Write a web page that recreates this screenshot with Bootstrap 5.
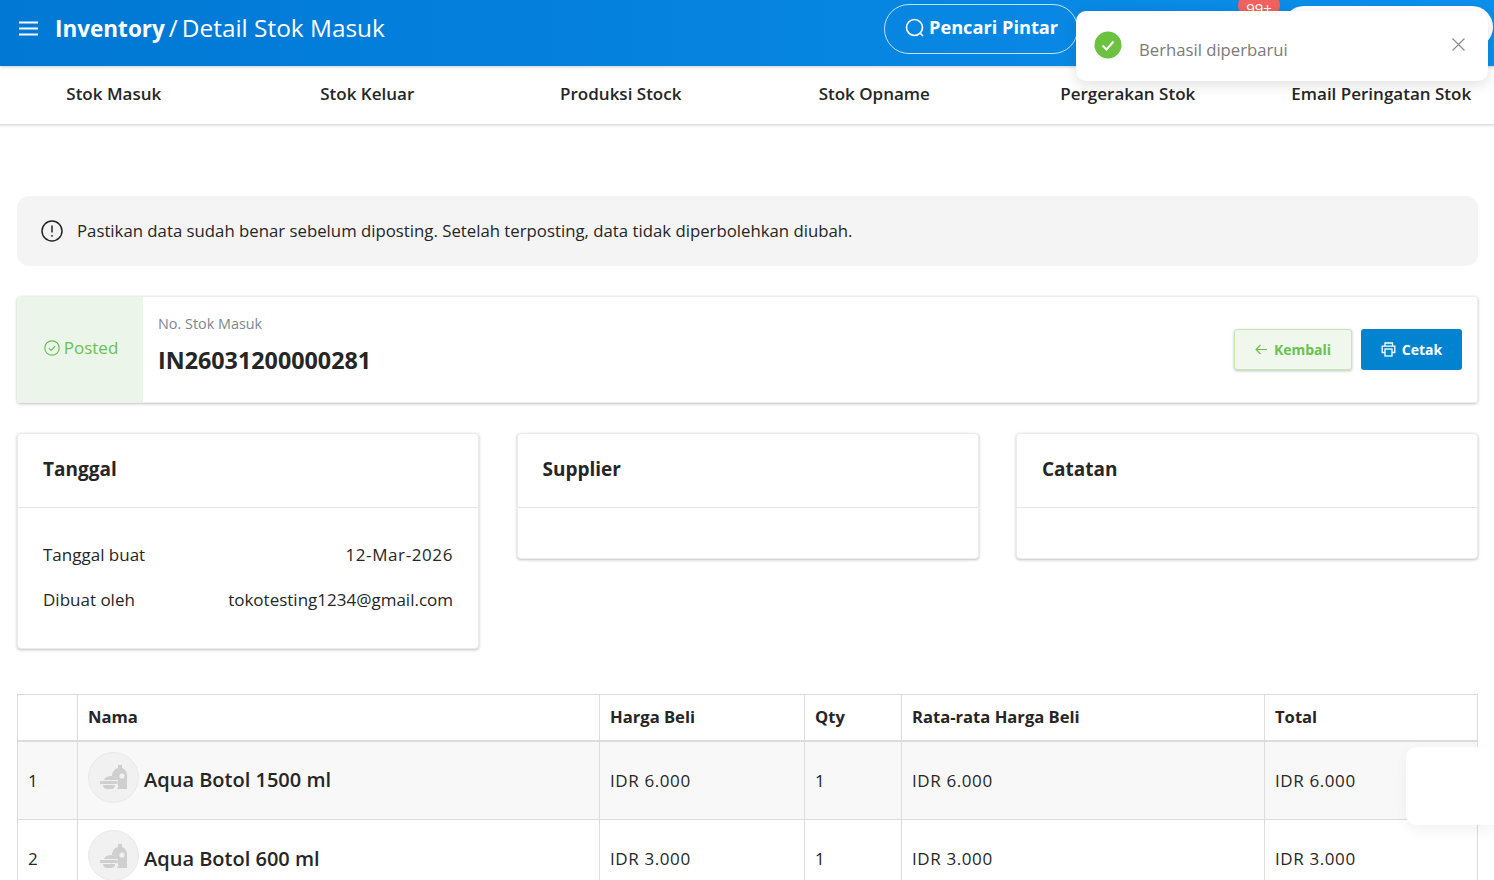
<!DOCTYPE html>
<html lang="id">
<head>
<meta charset="utf-8">
<title>Detail Stok Masuk</title>
<link href="https://cdn.jsdelivr.net/npm/bootstrap@5.3.0/dist/css/bootstrap.min.css" rel="stylesheet">
<style>
html,body{height:880px;overflow:hidden}
body{font-family:"Open Sans","Noto Sans",sans-serif;color:#262626;font-size:17px;background:#fff;position:relative}
.app-top{height:66px;background:linear-gradient(90deg,#0078d4,#0b8fea);color:#fff;padding:0 18px 10px;box-shadow:0 1px 3px rgba(0,0,0,.2);position:relative;z-index:2}
.app-title{font-size:24.4px;margin-left:16px;white-space:nowrap}
.app-title b{font-weight:700;font-size:22.5px}
.slash-mark{margin:0 4px 0 4px}
.finder{position:absolute;left:884px;top:4px;width:194px;height:50px;border:1px solid rgba(255,255,255,.75);border-radius:25px;font-weight:700;font-size:18.2px;padding:0 0 2px 20px;gap:4px}
.count-pill{position:absolute;left:1238px;top:-6px;width:42px;height:22px;background:#f0625f;border-radius:11px;font-size:15px;text-align:center;line-height:28px}
.user-pill{position:absolute;left:1283px;top:6px;width:210px;height:42px;background:#fff;border-radius:21px}
.tab-strip{height:58px;margin-left:-13px;width:1521px;box-shadow:0 1px 3px rgba(0,0,0,.2);position:relative;z-index:1}
.tab-cell{width:253.5px;text-align:center;font-weight:600;line-height:56px;white-space:nowrap;color:#262626}
.note-toast{position:absolute;left:1076px;top:11px;width:412px;height:70px;background:#fff;border-radius:10px;box-shadow:0 4px 14px rgba(0,0,0,.12);z-index:5;color:#7a7a7a;font-size:16.7px}
.note-toast .t-ico{position:absolute;left:18px;top:20px}
.note-toast .t-text{position:absolute;left:63px;top:27px;line-height:24px}
.note-toast .t-x{position:absolute;left:375px;top:26px}
.page-body{padding:72px 16px 0 17px}
.info-bar{height:70px;background:#f4f4f4;border-radius:12px;padding-left:24px;gap:14px;margin-bottom:30px;font-size:16.77px}
.head-panel{height:107px;border:1px solid #eee;border-left:0;border-radius:4px;box-shadow:0 1px 3px rgba(0,0,0,.25);margin-bottom:30px;overflow:hidden}
.posted-box{width:126px;background:#ecf5ea;color:#69c24f;gap:4px;padding:0 0 3px 2px}
.head-main{padding:0 0 10px 15px}
.lbl-no{font-size:14.4px;color:#80868c;line-height:20px;margin-bottom:11px}
.val-no{font-size:23.3px;font-weight:700;line-height:30px}
.act-btn{font-size:14px;font-weight:700;height:41px;border-radius:3px;gap:6px;padding:0;display:flex;align-items:center;justify-content:center}
.act-back{width:118px;background:#f0f7ed;border:1px solid #c2e6b4;color:#69c24f;box-shadow:0 1px 3px rgba(0,0,0,.25);margin:0 9px 0 0}
.act-print{width:101px;background:#0283cf;border:0;color:#fff;margin:0 15px 0 0}
.tri-grid{display:grid;grid-template-columns:462px 462px 462px;column-gap:37.5px;align-items:start;margin-bottom:45px}
.info-panel{border-radius:4px;box-shadow:0 1px 3px rgba(0,0,0,.25);border:1px solid #ececec}
.info-head{height:74px;padding:0 25px;border-bottom:1px solid #e6e6e6;font-size:19px;font-weight:700;line-height:71px}
.info-foot{height:50px}
.info-rows{padding:24px 25px 26px;height:140px}
.info-rows>div{height:45px;line-height:45px}
.num-txt{letter-spacing:.6px}
.stock-table{width:1460px;margin:0;border-color:#dcdcdc;table-layout:fixed;font-size:17px;color:#262626}
.stock-table th{height:46px;font-weight:700;font-size:16.6px;padding:0 10px;vertical-align:middle;border-bottom-width:2px}
.stock-table td{height:78px;padding:0 10px;vertical-align:middle}
.stock-table .alt-row td{background:#f8f8f8;height:79px}
.item-thumb{width:51px;height:51px;border-radius:50%;background:#f1f1f1;border:1px solid #e9e9e9;flex:none;margin:0 1px 6px 0}
.item-name{font-size:20px;font-weight:600}
.float-blank{position:absolute;left:1406px;top:747px;width:88px;height:78px;background:#fff;border-radius:10px 0 0 10px;box-shadow:0 6px 14px rgba(0,0,0,.05);z-index:3}
</style>
</head>
<body>
<header class="app-top d-flex align-items-center">
  <svg width="21" height="15" viewBox="0 0 21 15" fill="none" stroke="#fff" stroke-width="1.8"><path d="M1 1.5h19M1 7.5h19M1 13.5h19"/></svg>
  <div class="app-title"><b>Inventory</b><span class="slash-mark">/</span>Detail Stok Masuk</div>
  <div class="finder d-flex align-items-center">
    <svg width="20" height="20" viewBox="0 0 20 20" fill="none" stroke="#fff" stroke-width="1.6"><circle cx="9.5" cy="9.5" r="8"/><path d="M15 15l3 3"/></svg>
    <span>Pencari Pintar</span>
  </div>
  <div class="count-pill">99+</div>
  <div class="user-pill"></div>
</header>
<nav class="tab-strip d-flex">
  <div class="tab-cell">Stok Masuk</div>
  <div class="tab-cell">Stok Keluar</div>
  <div class="tab-cell">Produksi Stock</div>
  <div class="tab-cell">Stok Opname</div>
  <div class="tab-cell">Pergerakan Stok</div>
  <div class="tab-cell">Email Peringatan Stok</div>
</nav>
<div class="note-toast">
  <svg class="t-ico" width="28" height="28" viewBox="0 0 28 28"><circle cx="14" cy="14" r="13.5" fill="#6cc23f"/><path d="M8.5 14.5l4 4 7-8" fill="none" stroke="#fff" stroke-width="2"/></svg>
  <div class="t-text">Berhasil diperbarui</div>
  <svg class="t-x" width="15" height="15" viewBox="0 0 15 15" fill="none" stroke="#8c8c8c" stroke-width="1.2"><path d="M1.5 1.5l12 12M13.5 1.5l-12 12"/></svg>
</div>
<main class="page-body">
  <div class="info-bar d-flex align-items-center">
    <svg width="22" height="22" viewBox="0 0 22 22" fill="none" stroke="#262626" stroke-width="1.5"><circle cx="11" cy="11" r="10"/><path d="M11 5.5v7M11 15v1.8"/></svg>
    <span>Pastikan data sudah benar sebelum diposting. Setelah terposting, data tidak diperbolehkan diubah.</span>
  </div>
  <section class="head-panel d-flex">
    <div class="posted-box d-flex align-items-center justify-content-center">
      <svg width="16" height="16" viewBox="0 0 16 16" fill="none" stroke="#69c24f" stroke-width="1.2"><circle cx="8" cy="8" r="7.2"/><path d="M4.8 8.2l2.3 2.3 4-4.4"/></svg>
      <span>Posted</span>
    </div>
    <div class="head-main flex-grow-1 d-flex flex-column justify-content-center">
      <div class="lbl-no">No. Stok Masuk</div>
      <div class="val-no">IN26031200000281</div>
    </div>
    <div class="d-flex align-items-center">
      <button class="btn act-btn act-back"><svg width="13" height="11" viewBox="0 0 13 11" fill="none" stroke="#69c24f" stroke-width="1.1"><path d="M12 5.5H1M5.5 1L1 5.5 5.5 10"/></svg>Kembali</button>
      <button class="btn act-btn act-print"><svg width="15" height="15" viewBox="0 0 15 15" fill="none" stroke="#fff" stroke-width="1.3"><path d="M4 4V1h7.5v3M4 10.5H1.2V4.2h12.6v6.3H11"/><rect x="4" y="7" width="7" height="7"/></svg>Cetak</button>
    </div>
  </section>
  <section class="tri-grid">
    <div class="card info-panel">
      <div class="info-head">Tanggal</div>
      <div class="info-rows">
        <div class="d-flex justify-content-between"><span>Tanggal buat</span><span class="num-txt">12-Mar-2026</span></div>
        <div class="d-flex justify-content-between"><span>Dibuat oleh</span><span>tokotesting1234@gmail.com</span></div>
      </div>
    </div>
    <div class="card info-panel"><div class="info-head">Supplier</div><div class="info-foot"></div></div>
    <div class="card info-panel"><div class="info-head">Catatan</div><div class="info-foot"></div></div>
  </section>
  <table class="table table-bordered stock-table">
    <colgroup><col style="width:60px"><col style="width:522px"><col style="width:205px"><col style="width:97px"><col style="width:363px"><col style="width:213px"></colgroup>
    <thead><tr><th></th><th>Nama</th><th>Harga Beli</th><th>Qty</th><th>Rata-rata Harga Beli</th><th>Total</th></tr></thead>
    <tbody>
      <tr class="alt-row"><td>1</td><td><div class="d-flex align-items-center gap-1">
        <div class="item-thumb d-flex align-items-center justify-content-center"><svg width="28" height="26" viewBox="0 0 28 26" fill="#cfcfcf"><path d="M18 1h4v3c3 1 5 4 5 7v14H17c2-2 1-5 0-6 1-1 1-3 0-4-1-2-3-3-5-3 0-4 2-7 6-8z"/><circle cx="22" cy="12" r="2.6" fill="#f1f1f1"/><path d="M4 16c1-3 4-4 7-4s6 1 6 4zM1 17h15a1.5 1.5 0 010 3H1a1.5 1.5 0 010-3zM3 21h12c0 3-2 4-4 4H7c-2 0-4-1-4-4z"/></svg></div>
        <span class="item-name">Aqua Botol 1500 ml</span></div></td><td class="num-txt">IDR 6.000</td><td>1</td><td class="num-txt">IDR 6.000</td><td class="num-txt">IDR 6.000</td></tr>
      <tr><td>2</td><td><div class="d-flex align-items-center gap-1">
        <div class="item-thumb d-flex align-items-center justify-content-center"><svg width="28" height="26" viewBox="0 0 28 26" fill="#cfcfcf"><path d="M18 1h4v3c3 1 5 4 5 7v14H17c2-2 1-5 0-6 1-1 1-3 0-4-1-2-3-3-5-3 0-4 2-7 6-8z"/><circle cx="22" cy="12" r="2.6" fill="#f1f1f1"/><path d="M4 16c1-3 4-4 7-4s6 1 6 4zM1 17h15a1.5 1.5 0 010 3H1a1.5 1.5 0 010-3zM3 21h12c0 3-2 4-4 4H7c-2 0-4-1-4-4z"/></svg></div>
        <span class="item-name">Aqua Botol 600 ml</span></div></td><td class="num-txt">IDR 3.000</td><td>1</td><td class="num-txt">IDR 3.000</td><td class="num-txt">IDR 3.000</td></tr>
    </tbody>
  </table>
</main>
<div class="float-blank"></div>
<script src="https://cdn.jsdelivr.net/npm/bootstrap@5.3.0/dist/js/bootstrap.bundle.min.js"></script>
</body>
</html>
